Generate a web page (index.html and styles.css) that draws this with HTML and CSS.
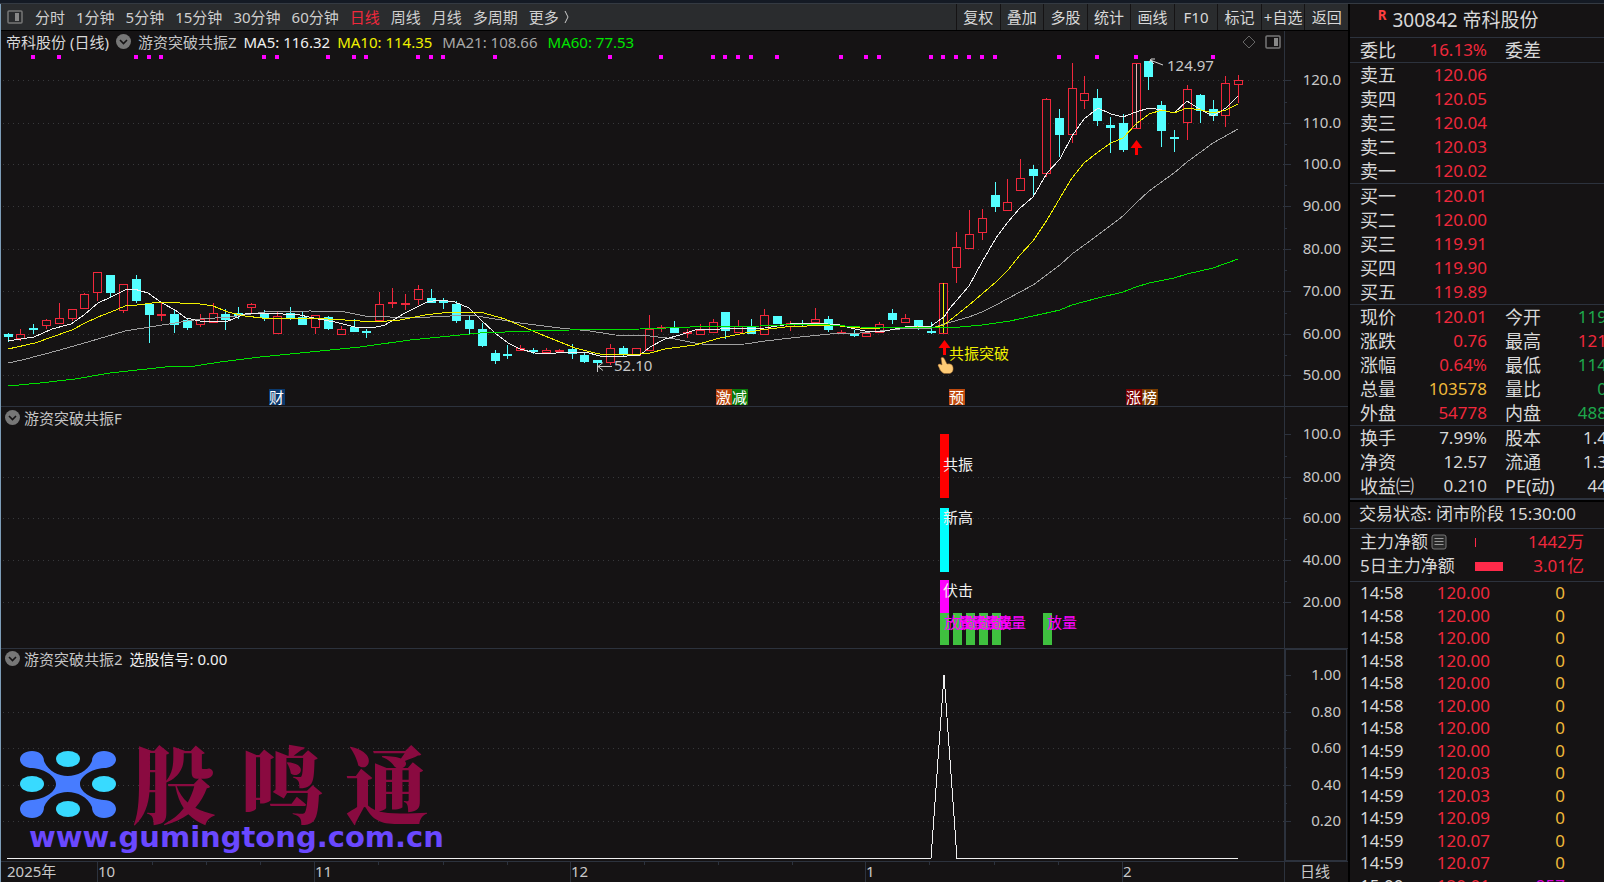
FILE: index.html
```html
<!DOCTYPE html>
<html lang="zh-CN">
<head>
<meta charset="utf-8">
<title>帝科股份 300842 日线</title>
<link rel="stylesheet" href="styles.css">
</head>
<body>
<div class="titlebar"></div>
<div class="app">
  <main class="charts">
    <nav class="toolbar">
      <div class="periods">
        <button class="tool icon-tool" aria-label="侧栏"><svg width="16" height="14" viewBox="0 0 16 14"><rect x="1" y="1" width="14" height="12" rx="1" fill="none" stroke="#777" stroke-width="1.5"/><rect x="8" y="3" width="4" height="8" fill="#888"/></svg></button>
        <button class="tool">分时</button>
        <button class="tool">1分钟</button>
        <button class="tool">5分钟</button>
        <button class="tool">15分钟</button>
        <button class="tool">30分钟</button>
        <button class="tool">60分钟</button>
        <button class="tool active">日线</button>
        <button class="tool">周线</button>
        <button class="tool">月线</button>
        <button class="tool">多周期</button>
        <button class="tool more">更多<svg width="6" height="14" viewBox="0 0 6 14"><path d="M1 1L4 7L1 13" fill="none" stroke="#ccc"/></svg></button>
      </div>
      <div class="actions">
        <button class="action">复权</button>
        <button class="action">叠加</button>
        <button class="action">多股</button>
        <button class="action">统计</button>
        <button class="action">画线</button>
        <button class="action">F10</button>
        <button class="action">标记</button>
        <button class="action">+自选</button>
        <button class="action">返回</button>
      </div>
    </nav>

    <section class="panel">
      <svg class="plot" id="price" viewBox="1 31 1347 376"></svg>
      <header class="legend">
        <span class="stock">帝科股份 (日线)</span>
        <button class="fold" aria-label="指标菜单"><svg width="15" height="15" viewBox="0 0 15 15"><circle cx="7.5" cy="7.5" r="7.5" fill="#777"/><path d="M4 6L7.5 9.5L11 6" fill="none" stroke="#151314" stroke-width="1.6"/></svg></button>
        <span class="indicator">游资突破共振Z</span>
        <span class="ma5">MA5: 116.32</span>
        <span class="ma10">MA10: 114.35</span>
        <span class="ma21">MA21: 108.66</span>
        <span class="ma60">MA60: 77.53</span>
        <span class="legend-tools">
          <svg width="14" height="14" viewBox="0 0 14 14"><path d="M7 1L13 7L7 13L1 7Z" fill="none" stroke="#666"/></svg>
          <svg width="16" height="14" viewBox="0 0 16 14"><rect x="1" y="1" width="14" height="12" rx="1" fill="none" stroke="#777" stroke-width="1.5"/><rect x="9" y="3" width="4" height="8" fill="#888"/></svg>
        </span>
      </header>
    </section>

    <section class="panel">
      <svg class="plot" id="resonance" viewBox="1 407 1347 241"></svg>
      <header class="legend sub">
        <button class="fold" aria-label="指标菜单"><svg width="15" height="15" viewBox="0 0 15 15"><circle cx="7.5" cy="7.5" r="7.5" fill="#777"/><path d="M4 6L7.5 9.5L11 6" fill="none" stroke="#151314" stroke-width="1.6"/></svg></button>
        <span class="indicator">游资突破共振F</span>
      </header>
    </section>

    <section class="panel">
      <svg class="plot" id="pick" viewBox="1 648 1347 213"></svg>
      <header class="legend sub">
        <button class="fold" aria-label="指标菜单"><svg width="15" height="15" viewBox="0 0 15 15"><circle cx="7.5" cy="7.5" r="7.5" fill="#777"/><path d="M4 6L7.5 9.5L11 6" fill="none" stroke="#151314" stroke-width="1.6"/></svg></button>
        <span class="indicator">游资突破共振2</span>
        <span class="ma5">选股信号: 0.00</span>
      </header>
    </section>

    <svg class="plot" id="dates" viewBox="1 861 1347 21"></svg>
  </main>

  <aside class="quote">
    <h1 class="name"><sup>R</sup><span>300842 帝科股份</span></h1>
    <table class="book">
      <tr><th>委比</th><td class="up">16.13%</td><th>委差</th><td></td></tr>
    </table>
    <table class="book">
      <tr><th>卖五</th><td class="up">120.06</td><th></th><td></td></tr>
      <tr><th>卖四</th><td class="up">120.05</td></tr>
      <tr><th>卖三</th><td class="up">120.04</td></tr>
      <tr><th>卖二</th><td class="up">120.03</td></tr>
      <tr><th>卖一</th><td class="up">120.02</td></tr>
    </table>
    <table class="book">
      <tr><th>买一</th><td class="up">120.01</td><th></th><td></td></tr>
      <tr><th>买二</th><td class="up">120.00</td></tr>
      <tr><th>买三</th><td class="up">119.91</td></tr>
      <tr><th>买四</th><td class="up">119.90</td></tr>
      <tr><th>买五</th><td class="up">119.89</td></tr>
    </table>
    <table class="book">
      <tr><th>现价</th><td class="up">120.01</td><th>今开</th><td class="down">119</td></tr>
      <tr><th>涨跌</th><td class="up">0.76</td><th>最高</th><td class="up">121</td></tr>
      <tr><th>涨幅</th><td class="up">0.64%</td><th>最低</th><td class="down">114</td></tr>
      <tr><th>总量</th><td class="vol">103578</td><th>量比</th><td class="down">0</td></tr>
      <tr><th>外盘</th><td class="up">54778</td><th>内盘</th><td class="down">488</td></tr>
    </table>
    <table class="book last">
      <tr><th>换手</th><td>7.99%</td><th>股本</th><td>1.4</td></tr>
      <tr><th>净资</th><td>12.57</th><th>流通</th><td>1.3</td></tr>
      <tr><th>收益㈢</th><td>0.210</td><th>PE(动)</th><td>44</td></tr>
    </table>
    <p class="status">交易状态: 闭市阶段 15:30:00</p>
    <div class="flows">
      <div class="flow"><span class="flow-name">主力净额<svg width="16" height="16" viewBox="0 0 16 16"><rect x="1" y="1" width="14" height="14" rx="2" fill="#2a2a2a" stroke="#777"/><path d="M3.500 4.500H12.500M3.500 7.500H12.500M3.500 10.500H12.500" stroke="#999"/></svg></span><span class="flow-bar"><i class="thin"></i></span><span class="flow-value">1442万</span></div>
      <div class="flow"><span class="flow-name">5日主力净额</span><span class="flow-bar"><i class="wide"></i></span><span class="flow-value">3.01亿</span></div>
    </div>
    <table class="ticks">
      <tr><td>14:58</td><td class="up">120.00</td><td class="vol">0</td></tr>
      <tr><td>14:58</td><td class="up">120.00</td><td class="vol">0</td></tr>
      <tr><td>14:58</td><td class="up">120.00</td><td class="vol">0</td></tr>
      <tr><td>14:58</td><td class="up">120.00</td><td class="vol">0</td></tr>
      <tr><td>14:58</td><td class="up">120.00</td><td class="vol">0</td></tr>
      <tr><td>14:58</td><td class="up">120.00</td><td class="vol">0</td></tr>
      <tr><td>14:58</td><td class="up">120.00</td><td class="vol">0</td></tr>
      <tr><td>14:59</td><td class="up">120.00</td><td class="vol">0</td></tr>
      <tr><td>14:59</td><td class="up">120.03</td><td class="vol">0</td></tr>
      <tr><td>14:59</td><td class="up">120.03</td><td class="vol">0</td></tr>
      <tr><td>14:59</td><td class="up">120.09</td><td class="vol">0</td></tr>
      <tr><td>14:59</td><td class="up">120.07</td><td class="vol">0</td></tr>
      <tr><td>14:59</td><td class="up">120.07</td><td class="vol">0</td></tr>
      <tr><td>15:00</td><td class="up">120.01</td><td class="big">957</td></tr>
    </table>
  </aside>
</div>
<script src="chart.js"></script>
</body>
</html>
```
FILE: styles.css
```css
* {
  box-sizing: border-box;
}

body {
  margin: 0;
  height: 100vh;
  display: flex;
  flex-direction: column;
  overflow: hidden;
  background: #151314;
  color: #d8d8d8;
  font: 15px/22px "Noto Sans", "Noto Sans CJK SC", sans-serif;
}

button {
  margin: 0;
  padding: 0;
  border: 0;
  background: none;
  color: inherit;
  font: inherit;
  white-space: nowrap;
}

.titlebar {
  flex: none;
  height: 4px;
  background: #141a24;
  border-bottom: 1px solid #343a42;
}

.app {
  flex: 1;
  min-height: 0;
  display: grid;
  grid-template-columns: minmax(0, 1fr) 256px;
}

.charts {
  min-width: 0;
  border-left: 1px solid #7d9db8;
}

/* toolbar */
.toolbar {
  display: flex;
  justify-content: space-between;
  height: 27px;
  background: #2a2c2e;
  border-bottom: 1px solid #000;
}

.periods {
  display: flex;
  align-items: center;
  gap: 11px;
  padding-left: 6px;
}

.tool {
  color: #cfcfcf;
}

.icon-tool {
  display: flex;
  margin-right: 1px;
}

.tool.active {
  color: #f0283c;
}

.more {
  display: flex;
  align-items: center;
  gap: 5px;
}

.actions {
  display: grid;
  grid-template-columns: repeat(9, minmax(0, 1fr));
  width: 392px;
}

.action {
  overflow: hidden;
  border-left: 1px solid #151314;
}

/* chart panels */
.panel {
  display: grid;
}

.plot {
  grid-area: 1 / 1;
  display: block;
  width: 100%;
  height: auto;
}

.legend {
  grid-area: 1 / 1;
  align-self: start;
  display: flex;
  align-items: center;
  gap: 7px;
  height: 21px;
  padding: 0 67px 0 5px;
  z-index: 1;
}

.sub {
  gap: 4px;
  padding-left: 4px;
}

.fold {
  display: flex;
}

.indicator {
  color: #c4c4c4;
}

.sub .ma5 {
  margin-left: 3px;
}

.ma5 {
  color: #f0f0f0;
}

.ma10 {
  color: #f0f000;
}

.ma21 {
  color: #a8a8a8;
}

.ma60 {
  color: #00e600;
}

.ma21,
.ma60 {
  margin-left: 3px;
}

.legend-tools {
  display: flex;
  gap: 9px;
  margin-left: auto;
}

.frame {
  fill: none;
  stroke: #2c323d;
  shape-rendering: crispEdges;
}

.grid {
  stroke: #38393c;
  stroke-dasharray: 1 4;
  shape-rendering: crispEdges;
}

.axis-text {
  fill: #c8c8c8;
  text-anchor: end;
}

.date-text {
  fill: #c8c8c8;
}

.line {
  fill: none;
  stroke-width: 1;
  shape-rendering: crispEdges;
}

.line.m5 {
  stroke: #f0f0f0;
}

.line.m10 {
  stroke: #f0f000;
}

.line.m21 {
  stroke: #a0a0a0;
}

.line.m60 {
  stroke: #00e000;
}

.rise {
  fill: #151314;
  stroke: #f0283c;
  shape-rendering: crispEdges;
}

.fall {
  fill: #54ffff;
  stroke: #54ffff;
  shape-rendering: crispEdges;
}

.dot {
  fill: #ff00ff;
}

.badge-text {
  fill: #fff;
  font-size: 15px;
}

.note {
  fill: #c8c8c8;
}

.breakout {
  fill: #f0f000;
}

.signal {
  fill: #f0f0f0;
}

.heavy {
  fill: #ff00ff;
}

.brand {
  fill: #8a0a40;
  font-size: 84px;
  font-weight: 900;
  font-family: "Noto Serif CJK SC", "Noto Sans CJK SC", serif;
}

.site {
  fill: #6a48ff;
  font: bold 29px "DejaVu Sans", sans-serif;
}

/* quote sidebar */
.quote {
  overflow: hidden;
  border-left: 2px solid #000;
  font-size: 17px;
  line-height: 24px;
}

.name {
  display: flex;
  gap: 6px;
  height: 33px;
  margin: 0;
  padding-left: 28px;
  font-size: 19px;
  font-weight: 400;
  line-height: 32px;
}

.name sup {
  color: #ff4040;
  font: bold 14px/22px "DejaVu Sans Mono", monospace;
}

.book {
  width: 257px;
  table-layout: fixed;
  border-collapse: collapse;
  border-top: 1px solid #2c323d;
}

.book tr {
  height: 24px;
}

.book th,
.book td {
  padding: 0;
  line-height: 24px;
  white-space: nowrap;
}

.book th {
  width: 65px;
  padding-left: 10px;
  font-size: 18px;
  font-weight: 400;
  text-align: left;
}

.book th:nth-child(3) {
  width: 74px;
  padding-left: 18px;
}

.book td {
  width: 46px;
  text-align: right;
}

.book td:nth-child(2) {
  width: 72px;
}

.book .up,
.ticks .up {
  color: #f0283c;
}

.down {
  color: #1ea84c;
}

.vol {
  color: #f0b93a;
}

.big {
  color: #d800d8;
}

.status {
  margin: 0;
  padding-left: 9px;
  border-top: 2px solid #2c323d;
  box-shadow: inset 0 2px #000;
  line-height: 28px;
}

.flows {
  padding: 1px 20px 3px 10px;
  border-top: 1px solid #2c323d;
  border-bottom: 1px solid #2c323d;
}

.flow {
  display: grid;
  grid-template-columns: 115px 33px 1fr;
  align-items: center;
  font-size: 17px;
}

.flow-name {
  display: flex;
  align-items: center;
  gap: 3px;
  white-space: nowrap;
}

.flow-value {
  color: #f0283c;
  text-align: right;
}

.flow-bar i {
  display: block;
  height: 9px;
  background: #ff2a4a;
}

.flow-bar .thin {
  width: 1px;
}

.flow-bar .wide {
  width: 28px;
}

.ticks {
  width: 215px;
  table-layout: fixed;
  border-collapse: collapse;
}

.ticks tr {
  height: 22px;
}

.ticks tr:nth-child(even) {
  height: 23px;
}

.ticks td {
  padding: 0;
  line-height: 22px;
  text-align: right;
}

.ticks td:first-child {
  width: 65px;
  padding-left: 10px;
  text-align: left;
}

.ticks td:nth-child(2) {
  width: 75px;
}
```
FILE: chart.js
```js
const NS = "http://www.w3.org/2000/svg";
const FIRST = 8;
const STEP = 12.82;
const PLOT_RIGHT = 1284;
const at = i => Math.floor(FIRST + STEP * i);

function add(parent, tag, attrs, text) {
  const el = document.createElementNS(NS, tag);
  for (const key in attrs) el.setAttribute(key, attrs[key]);
  if (text) el.textContent = text;
  parent.appendChild(el);
  return el;
}

function drawAxis(svg, rows, withGrid) {
  rows.forEach(([label, y], i) => {
    if (withGrid(i)) add(svg, "path", { class: "grid", d: `M3 ${y}.5H${PLOT_RIGHT}` });
    add(svg, "path", { class: "frame", d: `M${PLOT_RIGHT} ${y}.5h7` });
    if (i) {
      const mid = Math.round((y + rows[i - 1][1]) / 2);
      add(svg, "path", { class: "frame", d: `M${PLOT_RIGHT} ${mid}.5h3` });
    }
    add(svg, "text", { class: "axis-text", x: 1341, y: y + 5 }, label);
  });
}

/* each candle: direction, high, body top, body bottom, low */
const candles = `c333,334,337,342 r329,334,339,341 c324,328,330,334 r319,320,326,329 r303,318,324,324
r309,309,319,321 r293,294,309,309 r272,272,293,301 c275,275,293,298 r284,284,311,313
c275,279,301,303 c304,304,315,343 r303,314,316,321 c310,314,325,333 c318,320,328,330
r314,319,325,327 r303,313,323,323 c309,314,320,330 c307,313,316,319 r303,304,308,313
c310,314,318,321 r312,316,334,334 c307,313,318,320 c311,317,325,325 r315,315,328,334
c316,317,329,330 r326,329,335,335 c319,327,332,332 c329,331,333,338 r292,304,321,321
r288,302,304,308 r294,303,305,310 r285,289,300,305 c289,298,303,303 c298,301,303,309
c301,304,321,323 c316,320,329,334 c323,329,346,347 c350,353,361,364 c345,354,356,359
r345,348,351,351 c348,350,352,354 r348,350,353,353 r349,350,352,352 c344,349,354,359
c353,355,362,363 c360,360,363,365 r344,348,363,365 c346,348,355,356 r348,348,356,356
r315,329,351,351 r325,327,329,332 c321,327,333,333 r329,332,334,338 r324,330,335,335
r319,322,333,333 c312,312,331,339 r320,326,333,333 c319,326,334,334 r309,315,335,335
c316,316,324,324 r321,323,327,331 c320,323,324,327 r308,319,323,323 c316,319,330,332
r330,332,333,334 c330,333,336,337 r331,333,337,337 r322,324,333,333 c309,313,320,324
r314,318,323,323 c320,320,327,330 c322,331,333,334 r283,283,334,334 r232,247,268,283
r210,234,249,249 r209,218,233,240 c182,195,207,212 r179,202,211,211 r159,178,191,191
c165,169,176,197 r98,99,174,177 c109,118,135,157 r63,88,135,143 r76,93,101,109
c89,98,121,126 c117,125,128,153 c114,123,150,152 r63,63,129,129 c61,61,77,90
c101,105,131,147 c130,137,139,152 r85,89,123,140 c94,95,111,123 c100,109,116,121
r76,83,116,127 r75,80,85,103`.split(/\s+/);

const averages = {
  m21: "8,363 22,360 60,350 98,339 125,331 150,327 175,323 200,319 230,317 265,312 310,311 345,312 365,316 390,317 430,317 470,315 483,317 520,323 560,328 590,331 615,335 650,336 675,339 695,343 710,345 745,344 765,341 800,337 830,334 860,333 890,330 910,328 932,328 944,324 969,317 982,312 996,305 1033,285 1060,265 1072,254 1098,235 1123,216 1136,203 1149,191 1174,173 1187,162 1213,143 1238,129",
  m5: "8,341 34,337 52,329 71,324 84,315 98,303 111,297 125,290 134,289 148,293 162,303 175,310 186,318 200,321 228,321 245,314 265,313 300,315 318,319 335,322 355,327 372,328 385,325 405,313 427,302 440,300 455,302 469,308 480,319 495,333 508,343 520,349 535,353 550,354 562,352 585,352 600,356 615,357 640,355 650,347 665,339 680,335 695,330 720,329 765,328 790,324 815,323 840,325 855,329 870,332 885,331 905,327 931,326 944,317 950,308 969,286 982,262 996,238 1008,222 1020,208 1033,197 1047,173 1060,159 1072,136 1084,119 1098,108 1111,114 1123,117 1136,112 1149,108 1162,110 1174,113 1187,101 1201,110 1213,116 1226,108 1238,96",
  m10: "8,349 35,343 52,337 72,330 85,323 98,317 111,312 125,306 137,305 160,302 200,304 213,306 228,312 245,316 262,318 310,318 345,320 375,322 400,320 425,315 450,312 480,312 505,319 540,334 560,342 575,348 595,353 600,354 615,355 640,354 650,353 665,349 695,345 720,338 735,335 760,330 785,327 830,325 860,328 880,328 918,327 932,328 944,325 969,305 982,294 996,282 1008,270 1020,255 1033,241 1047,220 1060,198 1072,178 1084,163 1098,152 1111,143 1123,138 1136,124 1149,114 1162,110 1174,113 1187,108 1201,110 1213,113 1226,110 1238,104",
  m60: "8,386 40,383 75,379 110,373 165,367 195,366 220,362 260,357 300,353 360,347 410,340 450,336 480,333 530,331 570,330 640,329 690,327 760,326 800,324 830,325 860,327 932,328 960,327 982,325 1010,321 1033,316 1060,310 1072,305 1098,298 1123,292 1136,287 1149,283 1174,278 1187,274 1213,268 1238,259"
};

/* price panel */
const price = document.getElementById("price");
drawAxis(price, [["120.0", 80], ["110.0", 123], ["100.0", 164], ["90.00", 206], ["80.00", 249], ["70.00", 291], ["60.00", 334], ["50.00", 375]], () => true);
add(price, "path", { class: "frame", d: "M1284.5 31V407M1 406.5H1348" });

[2, 4, 10, 11, 12, 20, 21, 25, 27, 28, 32, 33, 34, 38, 47, 51, 55, 56, 57, 58, 60, 65, 67, 68, 72, 73, 74, 75, 76, 77, 82, 85, 88, 94]
  .forEach(i => add(price, "rect", { class: "dot", x: at(i) - 2, y: 55, width: 4, height: 4 }));

candles.forEach((row, i) => {
  const kind = row[0] === "r" ? "rise" : "fall";
  const [high, top, bottom, low] = row.slice(1).split(",").map(Number);
  const x = at(i) + 0.5;
  add(price, "path", { class: kind, d: `M${x} ${high}V${top}M${x} ${bottom}V${low}` });
  add(price, "rect", { class: kind, x: x - 4, y: top + 0.5, width: 8, height: Math.max(1, bottom - top - 1) });
});
add(price, "path", { d: `M${at(73) + 0.5} 283V333`, stroke: "#f0f000" });
add(price, "path", { d: `M${at(88) + 0.5} 64V128`, stroke: "#e8b0b0" });
for (const key in averages) add(price, "polyline", { class: "line " + key, points: averages[key] });

[[944, 340], [1136, 140]].forEach(([x, y]) =>
  add(price, "path", { d: `M${x + 0.5} ${y}l6 8h-4.500v7h-3v-7h-4.500z`, fill: "#f00" }));
add(price, "path", { d: "M941 358q2-2 3.500 1l2.500 5q5-1 6 3q1 5-3 6.500h-6q-4-2-5-6q-2-3 0-3.500q2 0 3 1z", fill: "#ffcb75", stroke: "#8a5a28", "stroke-width": 0.5 });
add(price, "text", { class: "breakout", x: 949, y: 359 }, "共振突破");
add(price, "path", { d: "M597.500 365v7M598 366.500H612M598 366.500l5-4M598 366.500l5 4", fill: "none", stroke: "#c8c8c8" });
add(price, "text", { class: "note", x: 614, y: 371 }, "52.10");
add(price, "path", { d: "M1163 65L1150 60M1149 63l2-4h4M1150 60l4 4", fill: "none", stroke: "#d8d8d8" });
add(price, "text", { class: "note", x: 1167, y: 71 }, "124.97");

[["财", 269, "#0b3a6e"], ["激", 716, "#b8440c"], ["减", 732, "#0a7a0a"], ["预", 949, "#c04a0e"], ["涨", 1126, "#7a0000"], ["榜", 1142, "#7a3c00"]]
  .forEach(([label, x, fill]) => {
    add(price, "rect", { x, y: 389, width: 16, height: 16, fill });
    add(price, "text", { class: "badge-text", x, y: 403 }, label);
  });

/* resonance panel */
const resonance = document.getElementById("resonance");
drawAxis(resonance, [["100.0", 434], ["80.00", 477], ["60.00", 518], ["40.00", 560], ["20.00", 602]], i => i > 0);
add(resonance, "path", { class: "frame", d: "M1284.5 407V648" });
[[434, 64, "#f00"], [508, 64, "#0ff"], [580, 33, "#f0f"]]
  .forEach(([y, height, fill]) => add(resonance, "rect", { x: 940, y, width: 9, height, fill }));
const heavyDays = [73, 74, 75, 76, 77, 81];
heavyDays.forEach(i => add(resonance, "rect", { x: at(i) - 3, y: 613, width: 9, height: 32, fill: "#3fc13f" }));
[["共振", 470], ["新高", 523], ["伏击", 596]]
  .forEach(([label, y]) => add(resonance, "text", { class: "signal", x: 943, y }, label));
heavyDays.forEach(i => add(resonance, "text", { class: "heavy", x: at(i) + 1, y: 628 }, "放量"));

/* stock-picking signal panel */
const pick = document.getElementById("pick");
drawAxis(pick, [["1.00", 675], ["0.80", 712], ["0.60", 748], ["0.40", 785], ["0.20", 821]], i => i > 0);
add(pick, "path", { class: "frame", d: "M1 648.5H1348M1284.5 648V861" });
add(pick, "rect", { class: "frame", x: 1285.5, y: 649.5, width: 61, height: 211 });
add(pick, "path", { d: "M32 751C39 751 44 755 44 761C48 771 58 776 67.700 776C77.400 776 88 771 92 761C92 755 97 751 104 751C111 751 116 755 116 759.500C116 764 111 768 104 768C90 769 80 777 80 784C80 791 90 799 104 800C111 800 116 804 116 809C116 814 111 818 104 818C97 818 92 814 92 807C88 797 77 792 67.700 792C58 792 48 797 44 807C44 814 39 818 32 818C25 818 20 814 20 809C20 804 25 800 32 800C46 799 56 791 56 784C56 777 46 769 32 768C25 768 20 764 20 759.500C20 755 25 751 32 751Z", fill: "#477cff" });
[[68, 759], [32, 784], [104, 784], [68, 809]]
  .forEach(([cx, cy]) => add(pick, "ellipse", { cx, cy, rx: 12, ry: 8, fill: "#38daff" }));
add(pick, "text", { class: "brand", x: "132 240 345", y: 817 }, "股鸣通");
add(pick, "text", { class: "site", x: 29, y: 847 }, "www.gumingtong.com.cn");
add(pick, "polyline", { class: "line m5", points: "7,858.5 931,858.5 944,675 957,858.5 1238,858.5" });

/* date axis */
const dates = document.getElementById("dates");
add(dates, "path", { class: "frame", d: "M1 861.5H1348M1284.5 861V882" });
[152, 206, 260, 378, 443, 507, 644, 718, 792, 929, 994, 1058]
  .forEach(x => add(dates, "path", { class: "frame", d: `M${x}.5 861v4` }));
[["10", 97], ["11", 314], ["12", 570], ["1", 865], ["2", 1122]].forEach(([label, x]) => {
  add(dates, "path", { class: "frame", d: `M${x}.5 861v21` });
  add(dates, "text", { class: "date-text", x: x + 1, y: 877 }, label);
});
add(dates, "text", { class: "date-text", x: 7, y: 877 }, "2025年");
add(dates, "text", { class: "date-text", x: 1300, y: 877 }, "日线");
```
